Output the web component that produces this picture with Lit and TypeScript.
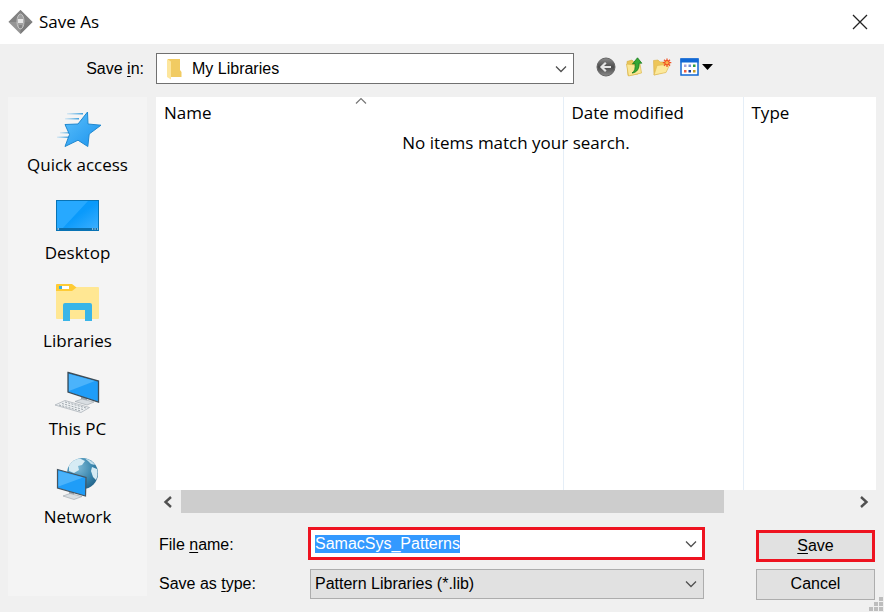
import { LitElement, html, css, svg } from "lit";
import { customElement } from "lit/decorators.js";

const chevron = html`<svg class="chevron" viewBox="0 0 12 8" aria-hidden="true">
  <path d="M1 1.5 6 6.5 11 1.5" fill="none" stroke="#505050" stroke-width="1.3" />
</svg>`;

const star = svg`
  <defs>
    <linearGradient id="st" x1="0" y1="0" x2="1" y2="1">
      <stop offset="0" stop-color="#5cc0fb" /><stop offset="1" stop-color="#1b93ee" />
    </linearGradient>
    <linearGradient id="sp"><stop offset="0" stop-color="#6db9e8" stop-opacity=".2" /><stop offset="1" stop-color="#3f9fdd" /></linearGradient>
  </defs>
  <g fill="url(#sp)">
    <rect x="13" y="8" width="16" height="1.5" /><rect x="11" y="13" width="14" height="1.5" />
    <rect x="6" y="27" width="11" height="1.5" /><rect x="3" y="31.5" width="12" height="1.5" />
  </g>
  <path d="M33.500 7 34 19 47 20.200 35.200 29 33.800 41.500 24 35.200 11 41.500 15.500 29.500 11 19.500 24 19Z"
    fill="url(#st)" stroke="#2088cf" stroke-width="1" stroke-linejoin="round" />`;

const desktop = svg`
  <defs><linearGradient id="dk" x1="0" y1="0" x2="1" y2="1">
    <stop offset=".5" stop-color="#0a9afb" /><stop offset="1" stop-color="#3fb0ff" />
  </linearGradient></defs>
  <rect x="2.500" y="7.500" width="42" height="30" fill="url(#dk)" stroke="#0873b5" />
  <path d="M3 8H34L8 36H3Z" fill="#27a9ff" />
  <rect x="3" y="35" width="41" height="2" fill="#0b6fae" />
  <path d="M3.500 36h1.500M38 36h1.200M40.500 36h1.200M43 36h1" stroke="#fff" />`;

const libraries = svg`
  <path d="M2 6H44a1 1 0 0 1 1 1V37a1 1 0 0 1-1 1H3a1 1 0 0 1-1-1Z" fill="#ffe793" />
  <path d="M2 4a1 1 0 0 1 1-1H18L22.500 6.500 18 10H2Z" fill="#fecb35" />
  <rect x="5" y="5" width="10" height="3" fill="#fff" /><rect x="5" y="5" width="3" height="3" fill="#39b0e4" />
  <path d="M9 40V24a2 2 0 0 1 2-2H36a2 2 0 0 1 2 2V40H31V29H16V40Z" fill="#39b5e8" />`;

const pc = svg`
  <path d="M27 27 33 29V33L27 32Z" fill="#9ba5ad" />
  <path d="M21 32.500 28 30 40 33 33 36Z" fill="#d9dee2" stroke="#9aa3aa" stroke-width=".6" />
  <path d="M14 3.500 44.500 12V33L14 23Z" fill="#1f9df8" stroke="#3e4d58" stroke-width="1.300" />
  <path d="M15 5 41 12 15 22Z" fill="#4bb3fb" />
  <path d="M1 36 11 31.500 35.500 38.500 27 43.500Z" fill="#eceff1" stroke="#a3abb1" stroke-width=".7" />
  <g stroke="#9fa7ad" stroke-width="1" stroke-dasharray="2 1.300">
    <path d="M5 36 27 42" /><path d="M8 34.500 29 40.500" /><path d="M11 33 32 39" />
  </g>`;

const network = svg`
  <defs><radialGradient id="gl" cx=".35" cy=".3" r=".8">
    <stop offset="0" stop-color="#7db9d6" /><stop offset=".6" stop-color="#3a86ad" /><stop offset="1" stop-color="#1f5f85" />
  </radialGradient></defs>
  <circle cx="28.500" cy="16.500" r="15.500" fill="url(#gl)" />
  <path d="M15 9C18 4 22 2 26 1.500L31 4 28 8 24 9 25 13 20 16 15 14Z" fill="#d6ebf4" />
  <path d="M31 1.500C36 2.500 39 5 41 8L37 7 34 4Z" fill="#c3e0ed" />
  <path d="M38 10 43 12C44 16 43.500 20 42 23L39 20 37 14Z" fill="#d6ebf4" />
  <path d="M15 34 20 36V40L15 38Z" fill="#9ba5ad" />
  <path d="M9 39 16 36.500 28 39.500 20 42.500Z" fill="#d9dee2" stroke="#9aa3aa" stroke-width=".6" />
  <path d="M3.500 12.500 32 20.500 31.500 39 3.500 31Z" fill="#1f9df8" stroke="#46545f" stroke-width="1.200" />
  <path d="M4.500 14 29 20.500 4.500 29.500Z" fill="#4bb3fb" />`;

const places = [
  { label: "Quick access", icon: star },
  { label: "Desktop", icon: desktop },
  { label: "Libraries", icon: libraries },
  { label: "This PC", icon: pc },
  { label: "Network", icon: network },
];

const tools = [
  {
    label: "Back",
    icon: svg`
      <defs><linearGradient id="bk" x1="0" y1="0" x2="0" y2="1">
        <stop offset="0" stop-color="#8c8c8c" /><stop offset=".5" stop-color="#4c4c4c" /><stop offset="1" stop-color="#8a8a8a" />
      </linearGradient></defs>
      <circle cx="10" cy="10" r="9" fill="url(#bk)" stroke="#666" />
      <path d="M15 10H6M9.800 5.800 5.500 10 9.800 14.200" fill="none" stroke="#e4e4e4" stroke-width="2.200" />`,
  },
  {
    label: "Up one level",
    icon: svg`
      <path d="M3 4.500 8 3 10 5 14 5V17L4 18.500Z" fill="#e9c558" stroke="#d2a93b" stroke-width=".6" />
      <path d="M2.500 7 12 8 16 7 17.500 16 4.500 19Z" fill="#fbe795" stroke="#dcb74c" stroke-width=".7" />
      <path d="M8 16C11 14.500 11.500 11 11 6.500L8.500 7 13.500 .8 17.800 6.200 15 6.200C15.500 11.500 13 15.500 8 16Z" fill="#35a835" stroke="#187a1c" stroke-width=".8" />`,
  },
  {
    label: "Create new folder",
    icon: svg`
      <path d="M1.500 3.500 6 3 8 5 13 5V15L2 18Z" fill="#eec659" stroke="#d8ae43" stroke-width=".6" />
      <path d="M5 8.500 18 7 14 15.500 2 18Z" fill="#fce99c" stroke="#dfba55" stroke-width=".7" />
      <g stroke="#f0562a" stroke-width="1.300"><path d="M15 1.500V10M10.800 5.700H19.300M12 2.700 18 8.700M18 2.700 12 8.700" /></g>
      <circle cx="15" cy="5.700" r="2.200" fill="#fbb04c" stroke="#ee4a1c" />`,
  },
];

@customElement("app-root")
export class AppRoot extends LitElement {
  static styles = css`
    :host {
      display: block;
      --ui: "Open Sans", "Noto Sans", sans-serif;
      --classic: "Liberation Sans", Arial, sans-serif;
      color: #000;
      font: 16px/24px var(--classic);
    }
    * { box-sizing: border-box; }
    svg { display: block; flex: none; }
    button, input, select { font: inherit; color: inherit; margin: 0; border-radius: 0; }
    u { text-underline-offset: 2px; text-decoration-thickness: 1px; }
    .window { position: relative; display: flex; flex-direction: column; min-height: 100vh; background: #f0f0f0; }
    .title { display: flex; align-items: center; height: 44px; padding: 0 16px 0 8px; gap: 6px; background: #fff; }
    .title h1 { flex: 1; margin: 0; font: 17px/24px var(--ui); }
    .logo { width: 25px; height: 26px; }
    .plain { display: flex; align-items: center; padding: 0; border: 0; background: none; }
    .close svg { width: 16px; height: 16px; }
    .lookup { display: flex; align-items: center; padding: 9px 8px 13px; }
    .lookup label { width: 136px; margin-right: 12px; text-align: right; }
    .combo { position: relative; display: flex; align-items: center; min-width: 0; }
    .combo select, .combo input {
      flex: 1; min-width: 0; height: 100%; padding: 0 32px 0 4px; border: 1px solid #adadad;
      appearance: none; background: #e1e1e1; outline: none;
    }
    .chevron { width: 12px; height: 8px; }
    .combo > .chevron { position: absolute; right: 7px; pointer-events: none; }
    .lookup .combo { flex: 1; height: 31px; }
    .lookup select { padding-left: 35px; border-color: #707070; background: #fff; }
    .folder { position: absolute; left: 10px; width: 16px; height: 22px; }
    .tools { display: flex; align-items: center; gap: 8px; width: 302px; height: 20px; margin-bottom: 4px; padding-left: 22px; }
    .tools svg { width: 20px; height: 20px; }
    .tools .views { width: 34px; }
    .main { flex: 1; display: grid; grid-template-columns: 139px 1fr; gap: 9px; padding: 0 8px 12px; }
    .places { margin-bottom: 4px; padding-top: 8px; background: #f4f4f4; }
    .place { flex-direction: column; width: 100%; height: 88px; font: 17px/24px var(--ui); }
    .place svg { width: 47px; height: 48px; }
    .content { display: flex; flex-direction: column; min-width: 0; }
    .list { position: relative; flex: 1; display: flex; background: #fff; font: 17px/24px var(--ui); }
    table { width: 100%; border-collapse: collapse; table-layout: fixed; }
    th { height: 32px; padding: 0 8px; font-weight: 400; text-align: left; }
    td { padding: 0; }
    th + th, td + td { border-left: 1px solid #e5eef7; }
    .name { width: 407px; }
    .date { width: 180px; }
    .sort { position: absolute; left: 199px; top: 0; width: 12px; height: 8px; }
    .empty { position: absolute; top: 34px; left: 0; right: 0; margin: 0; text-align: center; }
    .scroll { display: flex; align-items: center; height: 23px; gap: 8px; padding: 0 7px; }
    .scroll svg { width: 10px; height: 14px; }
    .track { flex: 1; height: 100%; }
    .thumb { width: 81%; height: 100%; background: #cdcdcd; }
    .form {
      display: grid; grid-template-columns: 152px 1fr 119px; grid-template-rows: 35px 32px; row-gap: 6px;
      margin-right: 1px; padding-top: 14px; align-items: center;
    }
    .form label { padding-left: 3px; }
    .form .combo { margin: 0 52px 0 2px; height: 30px; }
    .form .file { height: 33px; margin: 0 51px 2px 0; }
    .file input { border: 3px solid #ee1320; background: #fff; line-height: 20px; }
    .file input::selection { background: #3399ff; color: #fff; }
    .combo .drop { position: absolute; right: 8px; }
    .action { height: 31px; padding: 0; border: 1px solid #adadad; background: #e1e1e1; }
    .action.save { height: 32px; margin-top: 3px; border: 3px solid #ee1320; }
    .grip { position: absolute; right: 1px; bottom: 1px; width: 14px; height: 14px; }
  `;

  firstUpdated() {
    const input = this.renderRoot.querySelector<HTMLInputElement>("#file");
    input?.focus();
    input?.select();
  }

  render() {
    return html`<main class="window">
      <header class="title">
        <svg class="logo" viewBox="0 0 25 26" aria-hidden="true">
          <path d="M12.500 1 24.500 13 12.500 25 .5 13Z" fill="#959595" />
          <path d="M12.500 1 24.500 13H.5Z" fill="#828282" />
          <path d="M12.500 13H24.500L12.500 25Z" fill="#7c7c7c" />
          <ellipse cx="12.500" cy="12.500" rx="3.500" ry="7.500" fill="#a0a0a0" stroke="#c4c4c4" />
          <rect x="10" y="10" width="5" height="4" fill="#e6e6e6" />
          <rect x="11" y="16" width="3" height="3" fill="#858585" />
        </svg>
        <h1>Save As</h1>
        <button class="plain close" aria-label="Close">
          <svg viewBox="0 0 16 16"><path d="M1 1 15 15M15 1 1 15" stroke="#222" stroke-width="1.300" /></svg>
        </button>
      </header>

      <div class="lookup">
        <label for="folder">Save <u>i</u>n:</label>
        <div class="combo">
          <select id="folder"><option>My Libraries</option></select>
          <svg class="folder" viewBox="0 0 16 22" aria-hidden="true">
            <path d="M2 1H14V12L15.500 14V19H2Z" fill="#f1cb62" />
            <path d="M1 1 5 3.500V21.500L1 19Z" fill="#fde69d" />
          </svg>
          ${chevron}
        </div>
        <div class="tools">
          ${tools.map(
            (t) => html`<button class="plain" aria-label=${t.label}><svg viewBox="0 0 20 20">${t.icon}</svg></button>`
          )}
          <button class="plain" aria-label="View menu">
            <svg class="views" viewBox="0 0 34 20">
              <rect x="1" y="2" width="17" height="16" fill="#fff" stroke="#1268d4" stroke-width="1.500" />
              <rect x=".5" y="1.500" width="18" height="4" fill="#1268d4" />
              <rect x="4" y="7.500" width="2.500" height="2.500" fill="#a9a3d8" /><rect x="8.500" y="7.500" width="2.500" height="2.500" fill="#6e8fd8" /><rect x="13" y="7.500" width="2.500" height="2.500" fill="#2e9e3e" />
              <rect x="4" y="13" width="2.500" height="2.500" fill="#ef5b3c" /><rect x="8.500" y="13" width="2.500" height="2.500" fill="#173e9c" /><rect x="13" y="13" width="2.500" height="2.500" fill="#c79a22" />
              <path d="M22 7H33L27.500 13Z" fill="#000" />
            </svg>
          </button>
        </div>
      </div>

      <div class="main">
        <nav class="places" aria-label="Places">
          ${places.map(
            (p) => html`<button class="plain place"><svg viewBox="0 0 47 48" aria-hidden="true">${p.icon}</svg>${p.label}</button>`
          )}
        </nav>
        <section class="content">
          <div class="list">
            <table>
              <thead><tr><th class="name">Name</th><th class="date">Date modified</th><th>Type</th></tr></thead>
              <tbody><tr><td></td><td></td><td></td></tr></tbody>
            </table>
            <svg class="sort" viewBox="0 0 12 8" aria-hidden="true"><path d="M1 6.500 6 1.500 11 6.500" fill="none" stroke="#777" stroke-width="1.200" /></svg>
            <p class="empty">No items match your search.</p>
          </div>
          <div class="scroll">
            <button class="plain" aria-label="Scroll left"><svg viewBox="0 0 10 14"><path d="M8 2 2.500 7 8 12" fill="none" stroke="#505050" stroke-width="2.400" /></svg></button>
            <div class="track"><div class="thumb"></div></div>
            <button class="plain" aria-label="Scroll right"><svg viewBox="0 0 10 14"><path d="M2 2 7.500 7 2 12" fill="none" stroke="#505050" stroke-width="2.400" /></svg></button>
          </div>
          <form class="form" @submit=${(e: Event) => e.preventDefault()}>
            <label for="file">File <u>n</u>ame:</label>
            <div class="combo file">
              <input id="file" type="text" value="SamacSys_Patterns" spellcheck="false" autocomplete="off" />
              <button type="button" class="plain drop" aria-label="Show file names">${chevron}</button>
            </div>
            <button class="action save"><u>S</u>ave</button>
            <label for="type">Save as <u>t</u>ype:</label>
            <div class="combo">
              <select id="type"><option>Pattern Libraries (*.lib)</option></select>
              ${chevron}
            </div>
            <button type="button" class="action">Cancel</button>
          </form>
        </section>
      </div>
      <svg class="grip" viewBox="0 0 14 14" aria-hidden="true">
        <path d="M10 0h4v4h-4zM5 5h4v4h-4zM10 5h4v4h-4zM0 10h4v4h-4zM5 10h4v4h-4zM10 10h4v4h-4z" fill="#bdbdbd" />
      </svg>
    </main>`;
  }
}
